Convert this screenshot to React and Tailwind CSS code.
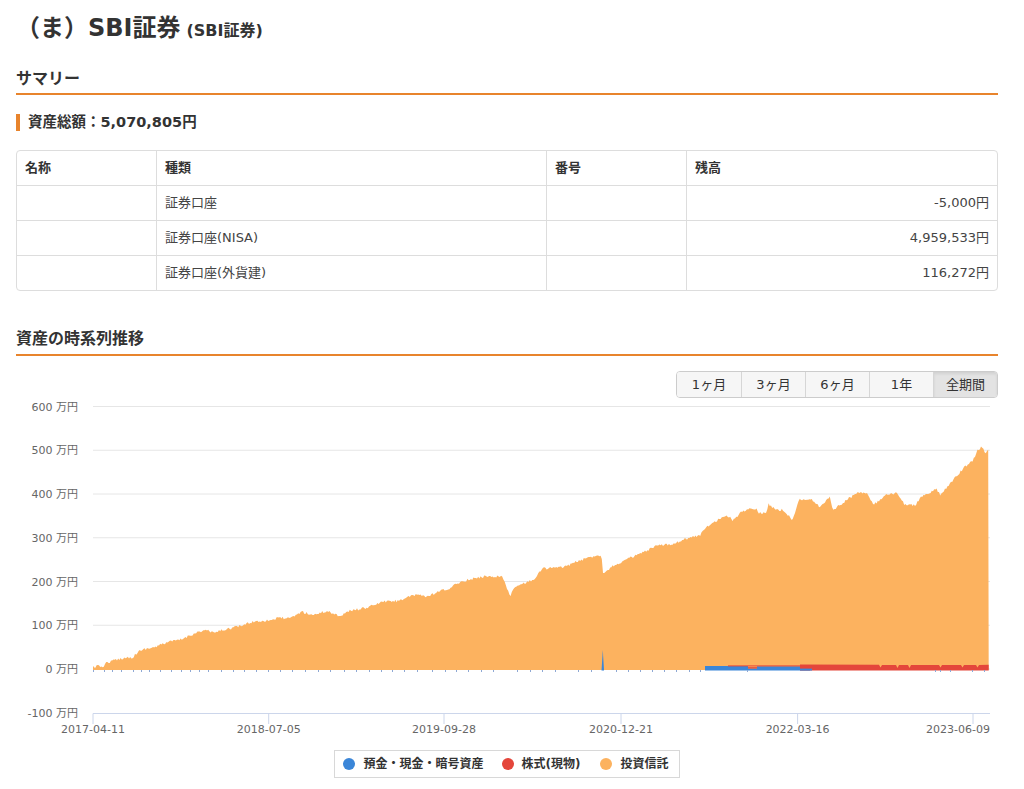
import React from "react";

const FONT = { fontFamily: '"DejaVu Sans", "Noto Sans CJK JP", sans-serif' };

// top edge of the 投資信託 area, in page pixels
const KP = [
  [93, 666.7], [104, 666], [106, 663], [110, 661.7], [121.7, 658.3], [133, 657], [138, 651.7],
  [145, 649], [156.7, 646.7], [160, 645], [168, 642], [180, 640], [186.7, 637], [195, 633],
  [206.7, 630], [213, 633], [220, 630.7], [240, 626], [253, 621.7], [270, 620], [280, 617.7],
  [290, 618.7], [301.7, 611.7], [313, 615], [326.7, 611], [340, 616], [350, 610.7],
  [366.7, 607.7], [383, 601.7], [396.7, 601], [410, 596.7], [420, 594.3], [426.7, 597],
  [443, 590], [450, 589], [456.7, 583.3], [466.7, 580], [486.7, 576], [501.7, 576.7],
  [505, 581.7], [510, 596.7], [515, 586.7], [520, 585], [533, 580], [543, 568.3],
  [563, 567.3], [576.7, 561.7], [596.7, 555], [601.7, 556.7], [603, 572.7], [613, 566],
  [633, 556.7], [643, 552.7], [656.7, 546], [675, 543.3], [681.7, 540], [700, 535],
  [706.7, 527], [720, 518.3], [730, 516], [733, 520.7], [740, 513.3], [746.7, 509],
  [756.7, 508.3], [757.5, 512.7], [766.7, 512.7], [768.3, 504], [776.7, 510], [783, 510],
  [793, 520], [798.3, 500], [810, 498.3], [820, 507.3], [830, 496.7], [833, 510],
  [846.7, 500], [858.3, 491.7], [866.7, 493.3], [873.3, 505], [886.7, 495], [896.7, 493.3],
  [905, 505], [915, 505], [921.7, 496.7], [936.7, 489.3], [940, 495], [953.3, 480],
  [965, 466.7], [973.3, 460], [976.7, 451.7], [981.7, 446.7], [985, 453.3], [988.7, 448.3],
];

const OX = 16;
const OY = 398;
const BASE = 272; // zero line in svg units

function interp(x) {
  for (let i = 0; i < KP.length - 1; i++) {
    const [x0, y0] = KP[i];
    const [x1, y1] = KP[i + 1];
    if (x >= x0 && x <= x1) return y0 + ((y1 - y0) * (x - x0)) / (x1 - x0 || 1);
  }
  return KP[KP.length - 1][1];
}

function buildArea() {
  let seed = 12345;
  const rnd = () => {
    seed = (seed * 16807) % 2147483647;
    return seed / 2147483647;
  };
  let d = `M ${93 - OX} ${BASE}`;
  for (let x = 93; x <= 988.7; x += 1.2) {
    const y = interp(x) + (rnd() - 0.5) * 2.6;
    d += ` L ${(x - OX).toFixed(1)} ${(y - OY).toFixed(1)}`;
  }
  d += ` L ${988.7 - OX} ${BASE} Z`;
  return d;
}

const AREA = buildArea();

const Y_LABELS = [600, 500, 400, 300, 200, 100, 0, -100];
const yOf = (v) => 271 - v * 0.4375;

const X_TICKS = [
  { x: 77, label: "2017-04-11" },
  { x: 252.7, label: "2018-07-05" },
  { x: 428, label: "2019-09-28" },
  { x: 605, label: "2020-12-21" },
  { x: 781.6, label: "2022-03-16" },
  { x: 957, label: "2023-06-09", end: true },
];

const BASE_TICKS = [
  93, 104, 112, 121, 133, 141, 149, 160, 171, 181, 190, 199, 208, 221, 233, 244, 256,
  268, 280, 292, 305, 318, 330, 344, 356, 369, 381, 392, 404, 417, 432, 445, 456, 468, 481, 493,
  517, 530, 542, 555, 578, 591, 616, 628, 640, 652, 664, 676, 689, 700, 747,
  935, 940, 950, 972, 984,
];

function Chart() {
  return (
    <svg width="982" height="347" viewBox="0 0 982 347" className="block" style={FONT}>
      {Y_LABELS.slice(0, 7).map((v) => (
        <line key={v} x1="77" x2="974" y1={yOf(v)} y2={yOf(v)} stroke="#e6e6e6" strokeWidth="1" />
      ))}
      {Y_LABELS.map((v) => (
        <text key={v} x="62" y={yOf(v) + 4} textAnchor="end" fontSize="11" fill="#666">
          {v} 万円
        </text>
      ))}

      <path d={AREA} fill="#fcb25f" />

      {/* blue / red stacks */}
      <rect x={705 - OX} y={666 - OY} width="43" height="4.5" fill="#3b86d8" />
      <rect x={748 - OX} y={668.5 - OY} width="9" height="2" fill="#3b86d8" />
      <rect x={757 - OX} y={666.3 - OY} width="53" height="4.2" fill="#3b86d8" />
      <rect x={748 - OX} y={667.2 - OY} width="9" height="1.3" fill="#e4463b" />
      <rect x={728 - OX} y={665.4 - OY} width="72" height="1" fill="#e4463b" />
      <path
        d={`M ${800 - OX} ${664.6 - OY} L ${879 - OX} ${664.8 - OY} L ${880.5 - OX} ${667.5 - OY} L ${882 - OX} ${665 - OY}
        L ${896 - OX} ${665 - OY} L ${897.5 - OX} ${668 - OY} L ${899 - OX} ${665 - OY} L ${908 - OX} ${665 - OY}
        L ${909.5 - OX} ${668 - OY} L ${911 - OX} ${665 - OY} L ${939 - OX} ${665 - OY} L ${940.5 - OX} ${667.5 - OY}
        L ${942 - OX} ${665 - OY} L ${961 - OX} ${665 - OY} L ${962.5 - OX} ${667.5 - OY} L ${964 - OX} ${665 - OY}
        L ${976 - OX} ${665 - OY} L ${977.5 - OX} ${667.5 - OY} L ${979 - OX} ${665 - OY} L ${988.7 - OX} ${664.8 - OY}
        L ${988.7 - OX} ${670.5 - OY} L ${800 - OX} ${670.5 - OY} Z`}
        fill="#e4463b"
      />
      <rect x={800 - OX} y={668.6 - OY} width="12" height="1.9" fill="#3b86d8" />
      <path d={`M ${601.5 - OX} ${670.5 - OY} L ${602.8 - OX} ${650 - OY} L ${604 - OX} ${670.5 - OY} Z`} fill="#3b86d8" />

      {BASE_TICKS.map((x) => (
        <rect key={x} x={x - OX} y={BASE} width="1" height="2" fill="#8ea8d4" />
      ))}

      {/* x axis */}
      <line x1="77" x2="974" y1="315.5" y2="315.5" stroke="#ccd6eb" strokeWidth="1" />
      {X_TICKS.map((t) => (
        <g key={t.label}>
          <line x1={t.x} x2={t.x} y1="315.5" y2="326" stroke="#ccd6eb" strokeWidth="1" />
          <text x={t.end ? 974 : t.x} y="335" textAnchor={t.end ? "end" : "middle"} fontSize="11" fill="#666">
            {t.label}
          </text>
        </g>
      ))}
    </svg>
  );
}

const SectionTitle = ({ children, className = "" }) => (
  <div className={`flex items-center border-b-2 border-[#e8842c] text-[16px] font-bold text-[#333] ${className}`}>
    {children}
  </div>
);

const ROWS = [
  { type: "証券口座", amount: "-5,000円" },
  { type: "証券口座(NISA)", amount: "4,959,533円" },
  { type: "証券口座(外貨建)", amount: "116,272円" },
];

const RANGES = ["1ヶ月", "3ヶ月", "6ヶ月", "1年", "全期間"];

export default function App() {
  return (
    <div className="min-h-[789px] bg-white pl-4 pr-[26px] text-[#333]" style={FONT}>
      {/* Title */}
      <div className="flex h-[56px] items-center">
        <h1 className="text-[24px] font-bold leading-none">（ま）SBI証券</h1>
        <span className="ml-[6px] mt-[5px] text-[16px] font-bold">(SBI証券)</span>
      </div>

      {/* Summary */}
      <SectionTitle className="mt-[8px] h-[31px]">サマリー</SectionTitle>
      <div className="mt-[19px] flex h-[17px] items-center border-l-4 border-[#e8842c] pl-2 text-[14.5px] font-bold">
        資産総額：5,070,805円
      </div>

      <div className="mt-[19px] overflow-hidden rounded-[4px] border border-[#dddddd] text-[13px] text-[#444]">
        <div className="grid h-[34px] grid-cols-[139px_390px_140px_1fr] items-center font-bold text-[#333]">
          <div className="pl-2">名称</div>
          <div className="flex h-full items-center border-l border-[#dddddd] pl-2">種類</div>
          <div className="flex h-full items-center border-l border-[#dddddd] pl-2">番号</div>
          <div className="flex h-full items-center border-l border-[#dddddd] pl-2">残高</div>
        </div>
        {ROWS.map((r) => (
          <div key={r.type} className="grid h-[35px] grid-cols-[139px_390px_140px_1fr] border-t border-[#dddddd]">
            <div />
            <div className="flex items-center border-l border-[#dddddd] pl-2">{r.type}</div>
            <div className="border-l border-[#dddddd]" />
            <div className="flex items-center justify-end border-l border-[#dddddd] pr-2">{r.amount}</div>
          </div>
        ))}
      </div>

      {/* Time series */}
      <SectionTitle className="mt-[33px] h-[32px]">資産の時系列推移</SectionTitle>

      <div className="mt-[15px] flex justify-end">
        <div className="flex h-[27px] overflow-hidden rounded-[4px] border border-[#cccccc] text-[13px] text-[#333]">
          {RANGES.map((r, i) => (
            <button
              key={r}
              className={`flex w-[64px] items-center justify-center ${i > 0 ? "border-l border-[#d6d6d6]" : ""} ${
                i === RANGES.length - 1 ? "bg-[#e3e3e3] shadow-[inset_0_2px_3px_rgba(0,0,0,0.08)]" : "bg-[#f6f6f6]"
              }`}
            >
              {r}
            </button>
          ))}
        </div>
      </div>

      <Chart />

      <div className="mt-[5px] flex justify-center">
        <div className="flex h-[28px] items-center border border-[#d8d8d8] pl-[8px] pr-[10px] text-[12px] font-bold text-[#333]">
          <span className="h-[12px] w-[12px] rounded-full bg-[#3b86d8]" />
          <span className="ml-[8px]">預金・現金・暗号資産</span>
          <span className="ml-[18px] h-[12px] w-[12px] rounded-full bg-[#e4463b]" />
          <span className="ml-[8px]">株式(現物)</span>
          <span className="ml-[20px] h-[12px] w-[12px] rounded-full bg-[#fcb25f]" />
          <span className="ml-[8px]">投資信託</span>
        </div>
      </div>
    </div>
  );
}
